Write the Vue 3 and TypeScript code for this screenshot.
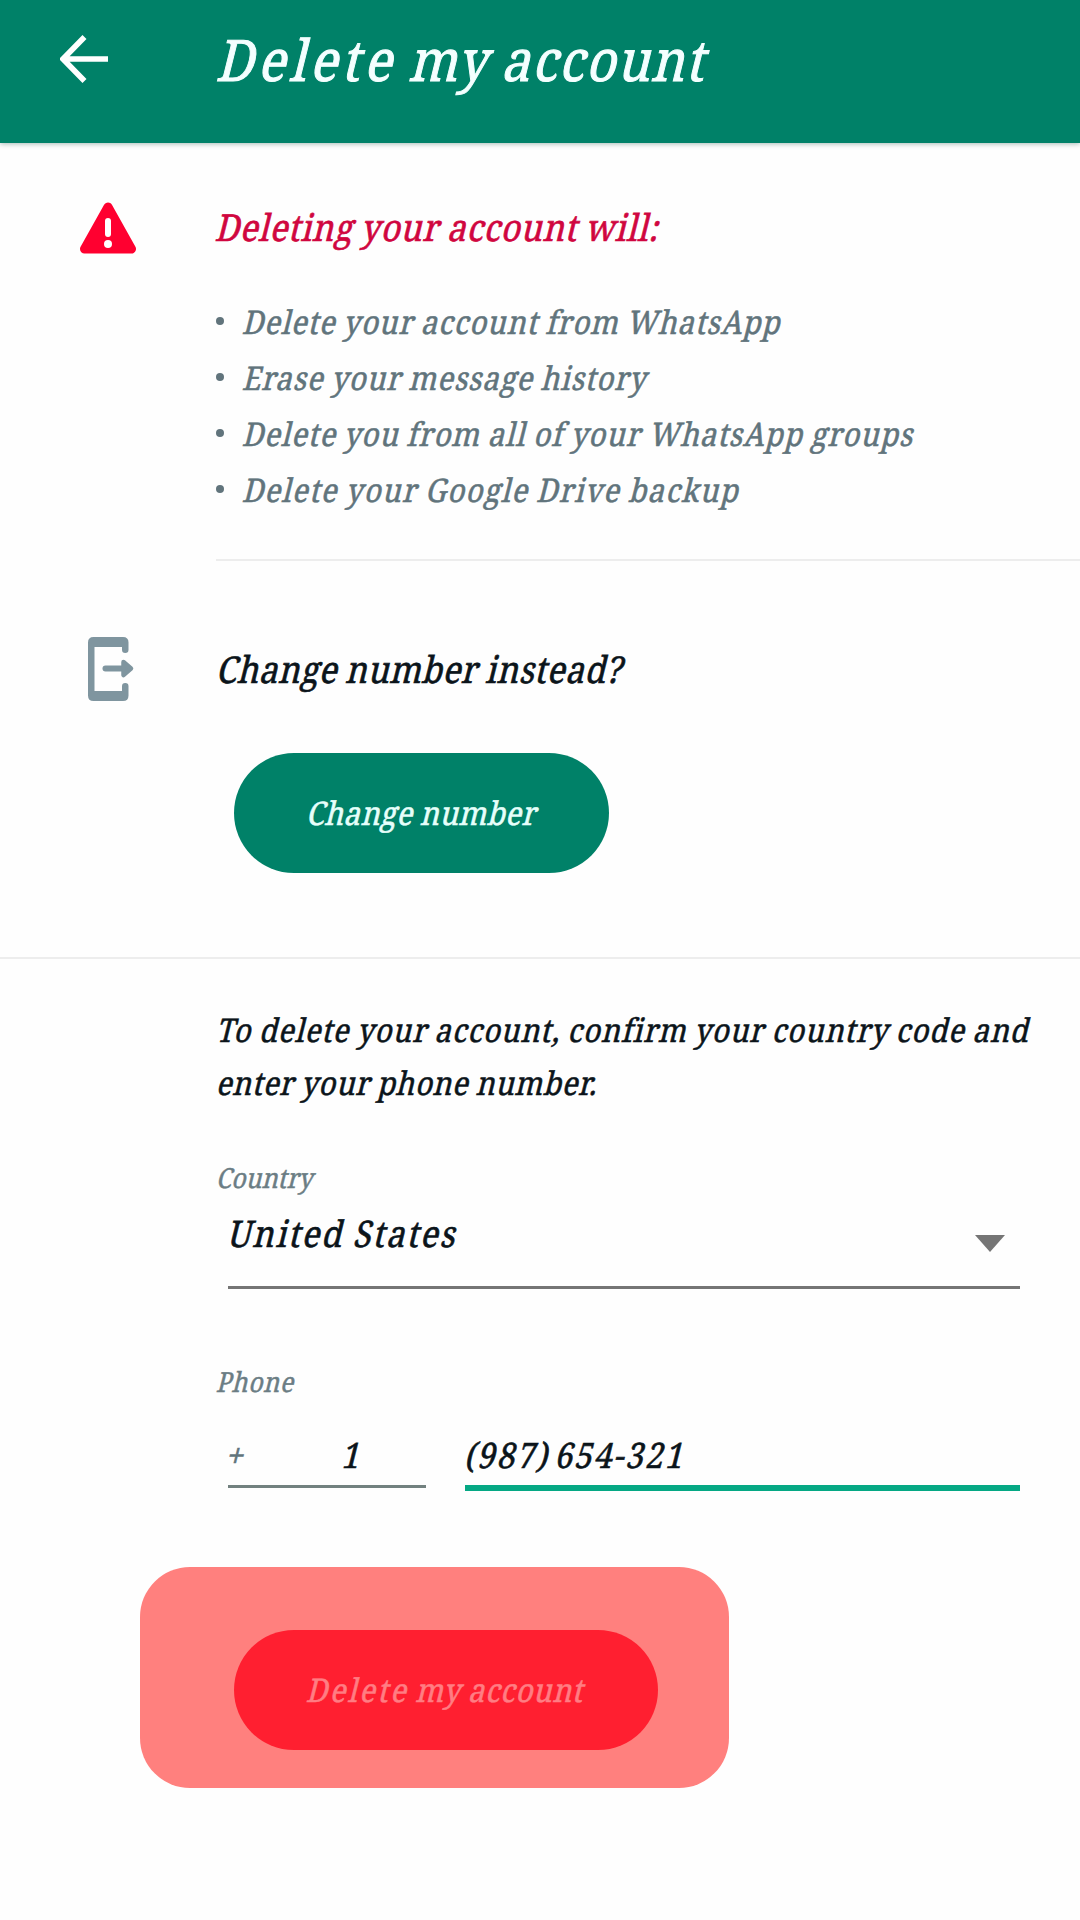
<script setup lang="ts">
import { ref } from 'vue'

interface Consequence {
  text: string
  tracking: string
}

const consequences: Consequence[] = [
  { text: 'Delete your account from WhatsApp', tracking: '0.036em' },
  { text: 'Erase your message history', tracking: '0.035em' },
  { text: 'Delete you from all of your WhatsApp groups', tracking: '0.038em' },
  { text: 'Delete your Google Drive backup', tracking: '0.048em' },
]
const country = ref('United States')
const code = ref('1')
const phone = ref('(987) 654-321')
</script>

<template>
  <main class="screen">
    <header class="bar">
      <svg class="back" viewBox="0 0 48 48"><path d="M48 24H4M24.5 2 3 24l21.500 22" fill="none" stroke="#fff" stroke-width="5.600" /></svg>
      <h1 class="title"><span class="t"><span class="verb">Delete</span> my account</span></h1>
    </header>

    <section class="warning">
      <svg class="alert" viewBox="0 0 58 52">
        <path d="M29 5 52.500 47H5.500Z" fill="#ff0030" stroke="#ff0030" stroke-width="9" stroke-linejoin="round" />
        <path d="M29 19v13" stroke="#fff" stroke-width="6" stroke-linecap="round" />
        <circle cx="29" cy="42" r="4" fill="#fff" />
      </svg>
      <div class="warning-body">
        <h2 class="heading red"><span class="t">Deleting your account will:</span></h2>
        <ul class="list">
          <li v-for="item in consequences" :key="item.text">
            <i class="dot"></i><span class="t" :style="{ letterSpacing: item.tracking }">{{ item.text }}</span>
          </li>
        </ul>
      </div>
    </section>

    <section class="change">
      <svg class="swap" viewBox="0 0 48 66" fill="#7f959f">
        <path d="M6 1H36q5.500 0 5.500 5.500V13.750a3.250 3.250 0 0 1-6.500 0V11H7.500V55H35V50.250a3.250 3.250 0 0 1 6.500 0V59.500Q41.500 65 36 65H6.500Q1 65 1 59.500V6.500Q1 1 6.500 1Z" />
        <path d="M18.500 32.500H38" stroke="#7f959f" stroke-width="6" stroke-linecap="round" />
        <path d="M36.500 26 44 32.500 36.500 39Z" stroke="#7f959f" stroke-width="4.500" stroke-linejoin="round" />
      </svg>
      <div>
        <h2 class="heading"><span class="t">Change number instead?</span></h2>
        <button class="pill"><span class="t">Change number</span></button>
      </div>
    </section>

    <section class="confirm">
      <p class="hint"><span class="t">To delete your account, confirm your country code and</span><br /><span class="t second">enter your phone number.</span></p>
      <label class="label"><span class="t">Country</span></label>
      <div class="select">
        <span class="t">{{ country }}</span>
        <svg class="caret" viewBox="0 0 30 17"><path d="M0 0h30L15 17Z" fill="#757575" /></svg>
      </div>
      <label class="label phone-label"><span class="t">Phone</span></label>
      <div class="phone">
        <div class="code"><span class="plus"><span class="t">+</span></span><span class="t">{{ code }}</span></div>
        <div class="number"><span class="t">{{ phone }}</span></div>
      </div>
    </section>

    <div class="highlight">
      <button class="pill danger"><span class="t"><span class="verb">Delete</span> my account</span></button>
    </div>
  </main>
</template>

<style scoped>
.screen {
  width: 1080px;
  height: 1920px;
  overflow: hidden;
  background: #fefefe;
  color: #0b141a;
  font-family: "Noto Serif", "DejaVu Serif Condensed", "DejaVu Serif", serif;
  word-spacing: -0.08em;
}
h1, h2, p, ul { margin: 0; padding: 0; font-weight: 400; }

/* Condensed, slanted lettering built on the upright serif */
.t {
  display: inline-block;
  white-space: pre;
  -webkit-text-stroke: 0.018em currentColor;
  transform-origin: 0 calc(50% + 0.388em);
  transform: translate(-1.500px, 1px) skewX(-14deg) scaleX(0.9);
}
.verb { letter-spacing: 0.085em; }
.bar {
  display: flex;
  height: 143px;
  box-sizing: border-box;
  padding-left: 60px;
  background: #008168;
  color: #f4ffff;
  box-shadow: 0 1px 5px rgba(0, 60, 50, 0.35);
}
.back { width: 48px; height: 48px; margin: 35px 109px 0 0; }
.title { font-size: 57px; line-height: 116px; letter-spacing: 0.032em; word-spacing: -0.04em; }
.warning { display: flex; padding-top: 53px; }
.alert { flex: none; width: 58px; height: 52px; margin: 6px 79px 0 79px; }
.warning-body { flex: 1; border-bottom: 2px solid #ededed; padding-bottom: 42px; }
.heading { font-size: 37px; line-height: 60px; letter-spacing: 0.019em; }
.red { color: #d0063f; letter-spacing: 0.022em; }
.list { margin-top: 37px; list-style: none; color: #61747c; font-size: 32.500px; line-height: 56px; }
.list li { display: flex; align-items: center; }
.dot { width: 8px; height: 8px; margin: 0 19px 0 0; border-radius: 50%; background: #61747c; }
.change { display: flex; padding: 77px 0 84px; border-bottom: 2px solid #ededed; }
.swap { flex: none; width: 48px; height: 66px; margin: -2px 82px 0 87px; }
.pill {
  display: flex;
  align-items: center;
  width: 375px;
  height: 120px;
  margin: 55px 0 0 17px;
  padding: 0 0 2px 73px;
  border: 0;
  border-radius: 60px;
  background: #008168;
  color: #e6fffb;
  font: 32.500px/56px "Noto Serif", "DejaVu Serif Condensed", "DejaVu Serif", serif;
  letter-spacing: 0.02em;
  word-spacing: -0.03em;
}
.confirm { padding: 44px 60px 0 217px; }
.hint { font-size: 32.500px; line-height: 52.500px; letter-spacing: 0.036em; white-space: nowrap; }
.second { letter-spacing: 0.025em; }
.label { display: block; margin-top: 49px; color: #6b7d84; font-size: 27.500px; line-height: 40px; letter-spacing: 0.007em; }
.select {
  display: flex;
  justify-content: space-between;
  margin: 6px 0 0 11px;
  padding-bottom: 25px;
  border-bottom: 3px solid #757575;
  font-size: 36.500px;
  line-height: 58px;
  letter-spacing: 0.06em;
}
.caret { width: 30px; height: 17px; margin: 32px 15px 0 0; }
.phone-label { margin-top: 72px; letter-spacing: 0.032em; }
.phone { display: flex; gap: 39px; align-items: flex-start; margin: 24px 0 0 11px; font-size: 35px; line-height: 58px; }
.code { display: flex; width: 198px; padding-bottom: 2px; border-bottom: 3px solid #72817f; }
.plus { width: 116px; margin-left: -2px; color: #61747c; }
.number { flex: 1; padding-bottom: 2px; border-bottom: 6px solid #05a884; letter-spacing: 0.066em; word-spacing: -0.16em; }
.highlight {
  display: flex;
  box-sizing: border-box;
  width: 589px;
  height: 221px;
  margin: 76px 0 0 140px;
  padding: 63px 0 0 94px;
  border-radius: 50px;
  background: #ff807e;
}
.danger { width: 424px; margin: 0; background: #ff1f30; color: #ff7d83; letter-spacing: 0.026em; word-spacing: -0.04em; }
</style>
